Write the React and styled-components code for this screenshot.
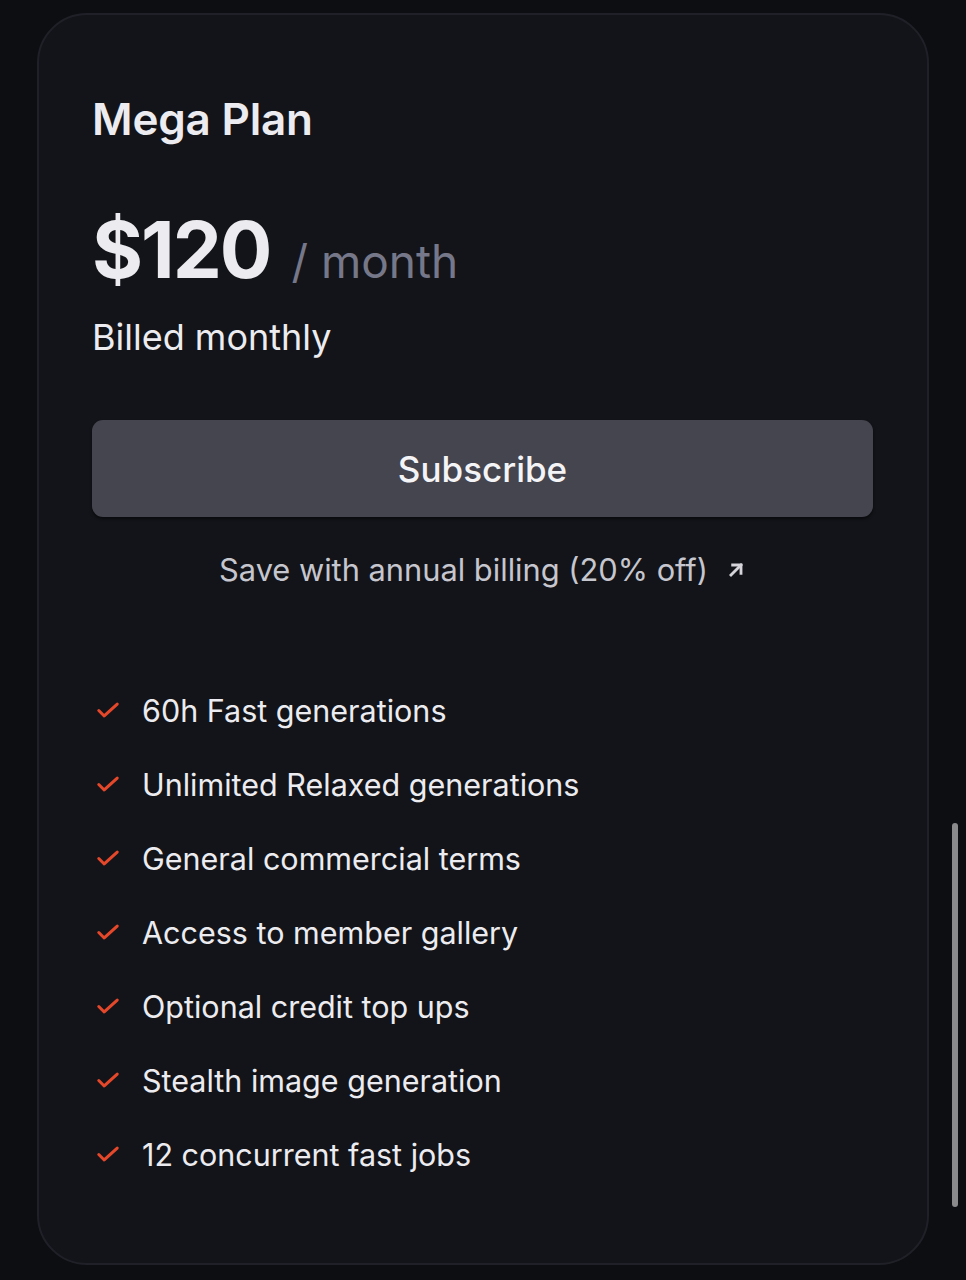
import React from 'react';
import styled, { createGlobalStyle } from 'styled-components';

const GlobalStyle = createGlobalStyle`
  html, body {
    margin: 0;
    padding: 0;
    background: #0d0e12;
  }
  body {
    font-family: 'Inter', 'Noto Sans', sans-serif;
    -webkit-font-smoothing: antialiased;
  }
`;

const Page = styled.div`
  position: relative;
  min-height: 1280px;
  padding: 13px 37px 0;
  box-sizing: border-box;
`;

const Card = styled.div`
  box-sizing: border-box;
  height: 1252px;
  background: #131419;
  border: 2px solid #202128;
  border-radius: 50px;
  padding: 82px 54px 0 53px;
  display: flex;
  flex-direction: column;
`;

const Title = styled.h2`
  margin: 0;
  font-size: 44px;
  line-height: 44px;
  font-weight: 600;
  color: #ececf0;
  letter-spacing: -0.2px;
`;

const PriceRow = styled.div`
  display: flex;
  align-items: baseline;
  gap: 21px;
  margin-top: 70px;
`;

const Amount = styled.span`
  font-size: 78px;
  line-height: 78px;
  font-weight: 700;
  color: #ececf0;
  letter-spacing: -2px;
`;

const Period = styled.span`
  font-size: 46px;
  line-height: 46px;
  font-weight: 400;
  color: #767889;
`;

const Billing = styled.p`
  margin: 32px 0 0;
  font-size: 36px;
  line-height: 33px;
  color: #ececf0;
`;

const SubscribeButton = styled.button`
  margin-top: 66px;
  height: 97px;
  width: 100%;
  border: none;
  border-radius: 11px;
  background: #45454f;
  box-shadow: 0 2px 3px rgba(0, 0, 0, 0.5);
  color: #f4f4f6;
  font-family: inherit;
  font-size: 35px;
  font-weight: 500;
  cursor: pointer;
`;

const AnnualLink = styled.a`
  margin-top: 39px;
  display: flex;
  justify-content: center;
  align-items: center;
  gap: 18px;
  font-size: 30.8px;
  line-height: 28px;
  color: #c6c6ce;
  text-decoration: none;
`;

const FeatureList = styled.ul`
  list-style: none;
  margin: 89px 0 0;
  padding: 0;
`;

const Feature = styled.li`
  display: flex;
  align-items: center;
  height: 74px;
  gap: 21px;
  font-size: 30.5px;
  line-height: 29px;
  color: #ececf0;
`;

const Scrollbar = styled.div`
  position: absolute;
  top: 823px;
  right: 8px;
  width: 6px;
  height: 384px;
  border-radius: 3px;
  background: #8a8a8c;
`;

const CheckIcon = () => (
  <svg width="26" height="26" viewBox="0 0 24 24" fill="none" stroke="#e4472a" strokeWidth="2.8" strokeLinecap="round" strokeLinejoin="round" style={{ marginLeft: 3, flexShrink: 0 }}>
    <path d="M3.5 12.5l5 5 12-11" />
  </svg>
);

const ArrowIcon = () => (
  <svg width="20" height="20" viewBox="0 0 24 24" fill="none" stroke="#d4d4da" strokeWidth="3.4" strokeLinecap="square">
    <path d="M6 18L18 6" />
    <path d="M8 6h10v10" />
  </svg>
);

const features = [
  '60h Fast generations',
  'Unlimited Relaxed generations',
  'General commercial terms',
  'Access to member gallery',
  'Optional credit top ups',
  'Stealth image generation',
  '12 concurrent fast jobs',
];

export default function App() {
  return (
    <Page>
      <GlobalStyle />
      <Card>
        <Title>Mega Plan</Title>
        <PriceRow>
          <Amount>$120</Amount>
          <Period>/ month</Period>
        </PriceRow>
        <Billing>Billed monthly</Billing>
        <SubscribeButton>Subscribe</SubscribeButton>
        <AnnualLink href="#">
          Save with annual billing (20% off) <ArrowIcon />
        </AnnualLink>
        <FeatureList>
          {features.map(f => (
            <Feature key={f}>
              <CheckIcon />
              {f}
            </Feature>
          ))}
        </FeatureList>
      </Card>
      <Scrollbar />
    </Page>
  );
}
